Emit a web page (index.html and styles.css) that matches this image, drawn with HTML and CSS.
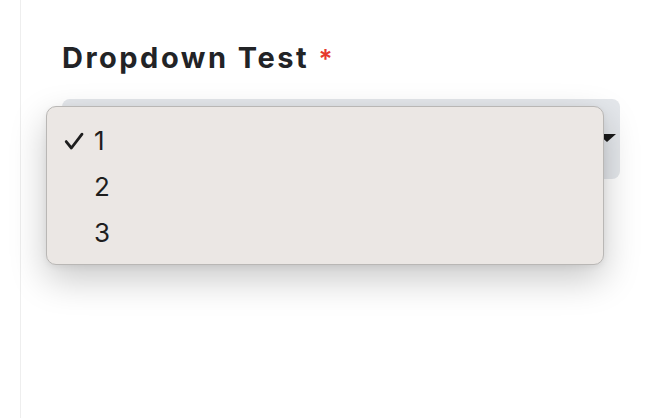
FILE: index.html
```html
<!DOCTYPE html>
<html lang="en">
<head>
<meta charset="utf-8">
<title>Dropdown Test</title>
<link rel="stylesheet" href="styles.css">
</head>
<body>
<div class="page">
  <div class="gutter"></div>
  <main class="content">
    <div class="field">
      <label class="field-label">Dropdown Test <span class="required">*</span></label>
      <div class="select-wrap">
        <div class="select-box">
          <span class="select-arrow"></span>
        </div>
        <ul class="popup">
          <li class="option selected">
            <span class="check"><svg viewBox="0 0 20 18" width="20" height="18"><path d="M2.2 9.6 L7.4 16 L18 2.2" fill="none" stroke="#1e1e1e" stroke-width="2.8" stroke-linecap="round" stroke-linejoin="round"/></svg></span>
            <span class="option-text">1</span>
          </li>
          <li class="option">
            <span class="check"></span>
            <span class="option-text">2</span>
          </li>
          <li class="option">
            <span class="check"></span>
            <span class="option-text">3</span>
          </li>
        </ul>
      </div>
    </div>
  </main>
</div>
</body>
</html>
```
FILE: styles.css
```css
html, body {
  margin: 0;
  padding: 0;
  background: #ffffff;
}

.page {
  display: flex;
  min-height: 418px;
}

.gutter {
  width: 20px;
  border-right: 1px solid #eeeeee;
  flex: none;
}

.content {
  flex: 1;
  padding: 41px 0 0 41px;
}

.field {
  width: 558px;
}

.field-label {
  display: block;
  font-family: Inter, Roboto, "Liberation Sans", sans-serif;
  font-weight: 700;
  font-size: 29px;
  line-height: 34px;
  letter-spacing: 2.5px;
  color: #222326;
  white-space: nowrap;
}

.required {
  color: #e5392d;
  font-size: 26px;
  font-weight: 600;
  letter-spacing: 0;
}

.select-wrap {
  position: relative;
  margin-top: 23px;
}

.select-box {
  height: 80px;
  border-radius: 8px;
  background: #e4e7eb;
  display: flex;
  justify-content: flex-end;
  align-items: center;
  padding-right: 4px;
}

.select-arrow {
  width: 0;
  height: 0;
  border-left: 9px solid transparent;
  border-right: 9px solid transparent;
  border-top: 8px solid #1a1a1a;
  margin-top: -2px;
}

.popup {
  position: absolute;
  left: -16px;
  top: 7px;
  width: 558px;
  height: 159px;
  margin: 0;
  padding: 11px 0 0 0;
  box-sizing: border-box;
  list-style: none;
  background: #ebe7e4;
  border: 1px solid #b9b7b5;
  border-radius: 10px;
  box-shadow: 0 14px 36px rgba(0, 0, 0, 0.22), 0 2px 6px rgba(0, 0, 0, 0.06);
  font-family: Inter, "Noto Sans", sans-serif;
}

.option {
  height: 46px;
  display: flex;
  align-items: center;
  color: #1e1e1e;
  font-size: 26px;
  line-height: 46px;
}

.check {
  width: 20px;
  height: 18px;
  margin-left: 17px;
  margin-right: 10px;
  display: flex;
  align-items: center;
}

.option-text {
  display: block;
}
```
